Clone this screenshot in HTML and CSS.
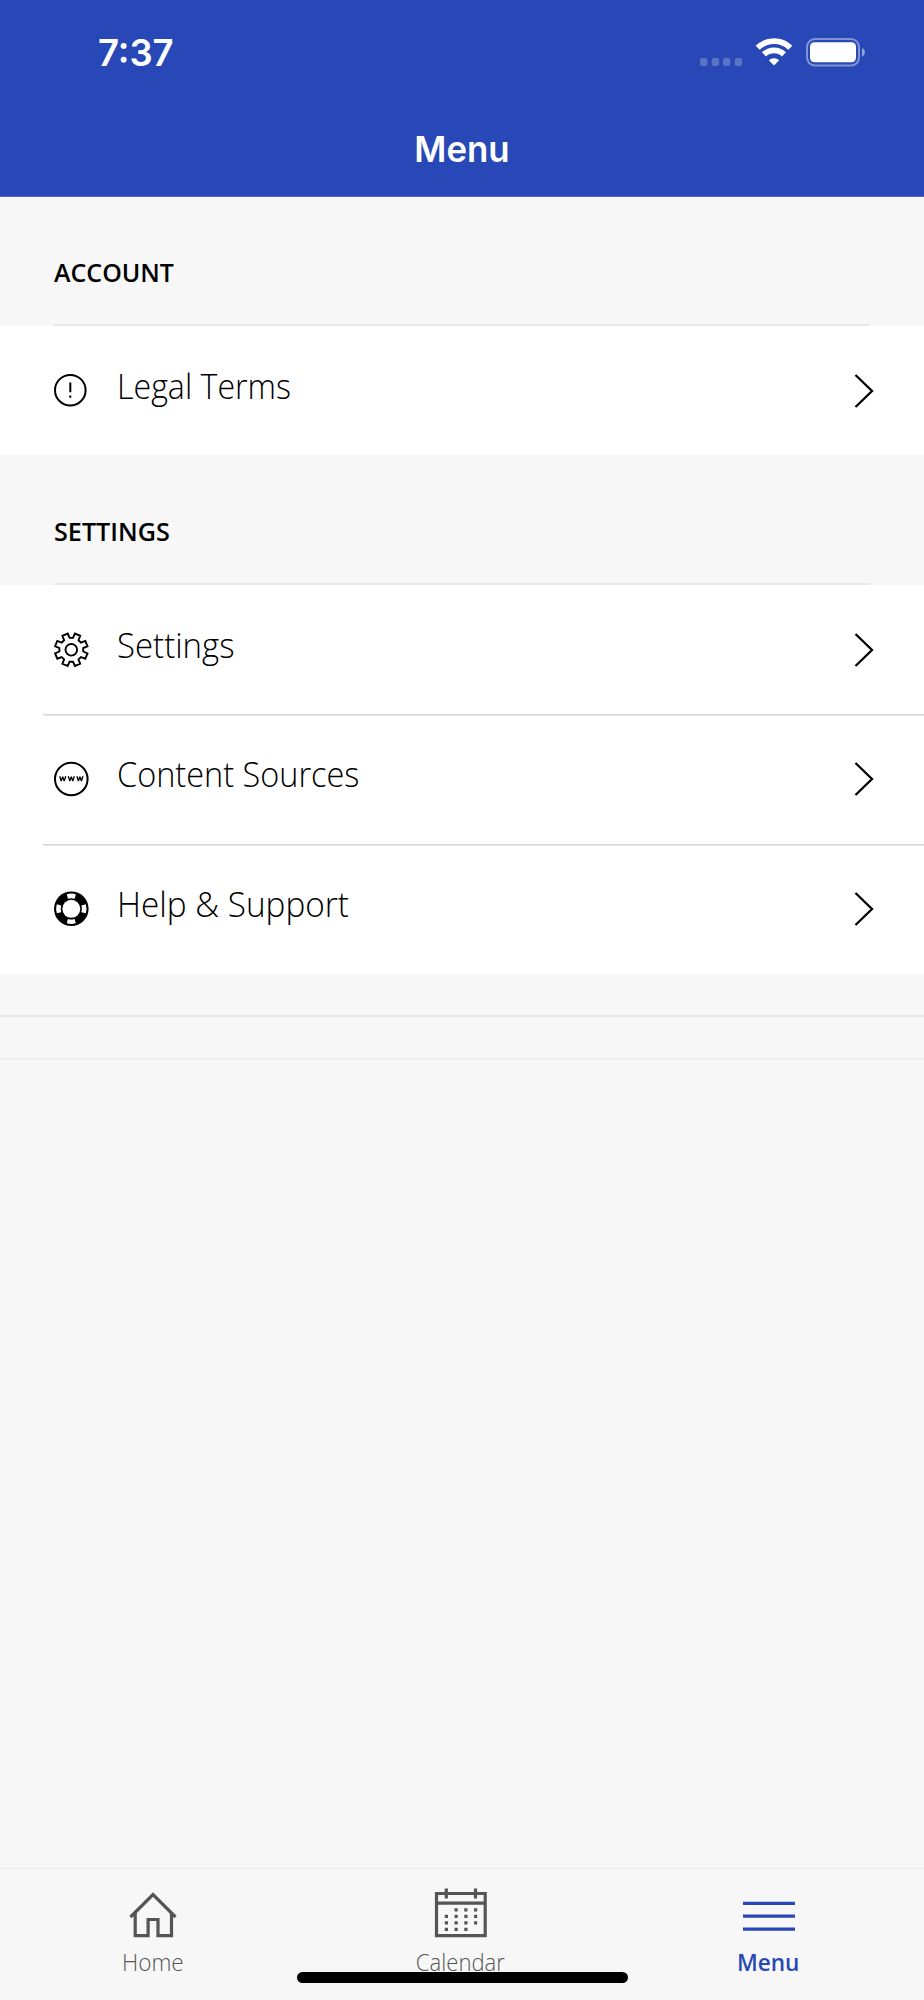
FILE: index.html
```html
<!DOCTYPE html>
<html lang="en">
<head>
<meta charset="utf-8">
<title>Menu</title>
<link rel="stylesheet" href="styles.css">
</head>
<body>
<div class="screen">
  <header class="header">
    <div class="status">
      <span class="time">7:37</span>
      <svg class="status-icons" width="170" height="32" viewBox="0 0 170 32">
        <g fill="#fff" fill-opacity=".24"><rect x="0" y="20" width="7.4" height="8" rx="2"/><rect x="11.7" y="20" width="7.4" height="8" rx="2"/><rect x="23" y="20" width="7.4" height="8" rx="2"/><rect x="34.7" y="20" width="7.4" height="8" rx="2"/></g>
        <g fill="none" stroke="#fff" stroke-width="5.8"><path d="M57.7 9.8A23.3 23.3 0 0 1 90.3 9.8"/><path d="M64 16.4A14.3 14.3 0 0 1 84 16.4"/></g>
        <path d="M74 27.6L68.8 22.3A7.4 7.4 0 0 1 79.2 22.3Z" fill="#fff"/>
        <rect x="107" y="1" width="52" height="26.6" rx="8" fill="none" stroke="#fff" stroke-opacity=".42" stroke-width="2"/>
        <rect x="110" y="4.3" width="46" height="20" rx="4.5" fill="#fff"/>
        <path d="M162 10Q165 11.5 165 14.3T162 18.7Z" fill="#fff" fill-opacity=".5"/>
      </svg>
    </div>
    <h1 class="title">Menu</h1>
  </header>
  <main class="content">
    <h2 class="section"><span class="section-text account">ACCOUNT</span></h2>
    <div class="row">
      <svg class="icon" width="36" height="36" viewBox="0 0 36 36"><circle cx="16.3" cy="17.2" r="15.3" fill="none" stroke="#000" stroke-width="2"/><path d="M16.3 9.5V19.3M16.3 22.4V24.8" stroke="#000" stroke-width="2"/></svg>
      <span class="label legal">Legal Terms</span>
      <svg class="chevron" width="20" height="36" viewBox="0 0 20 36"><path d="M1.5 2L18 18 1.5 34" fill="none" stroke="#000" stroke-width="2.3"/></svg>
    </div>
    <h2 class="section"><span class="section-text settings-title">SETTINGS</span></h2>
    <div class="row">
      <svg class="icon" width="36" height="36" viewBox="0 0 36 36"><g fill="none" stroke="#000" stroke-width="1.9" transform="translate(17.3 17.8)"><circle r="5.8"/><path d="M11.9 1.7L16.2 3.6L14 8.9L9.6 7.2L7.2 9.6L8.9 14L3.6 16.2L1.7 11.9H-1.7L-3.6 16.2L-8.9 14L-7.2 9.6L-9.6 7.2L-14 8.9L-16.2 3.6L-11.9 1.7V-1.7L-16.2 -3.6L-14 -8.9L-9.6 -7.2L-7.2 -9.6L-8.9 -14L-3.6 -16.2L-1.7 -11.9H1.7L3.6 -16.2L8.9 -14L7.2 -9.6L9.6 -7.2L14 -8.9L16.2 -3.6L11.9 -1.7Z"/></g></svg>
      <span class="label settings">Settings</span>
      <svg class="chevron" width="20" height="36" viewBox="0 0 20 36"><path d="M1.5 2L18 18 1.5 34" fill="none" stroke="#000" stroke-width="2.3"/></svg>
    </div>
    <div class="row divided">
      <svg class="icon" width="36" height="36" viewBox="0 0 36 36"><circle cx="17.3" cy="18" r="16.3" fill="none" stroke="#000" stroke-width="2"/><path d="M5.7 15.2L7.2 20L8.7 15.8L10.2 20L11.7 15.2M14.3 15.2L15.8 20L17.3 15.8L18.8 20L20.3 15.2M22.9 15.2L24.4 20L25.9 15.8L27.4 20L28.9 15.2" fill="none" stroke="#000" stroke-width="1.3" stroke-linejoin="bevel"/></svg>
      <span class="label sources">Content Sources</span>
      <svg class="chevron" width="20" height="36" viewBox="0 0 20 36"><path d="M1.5 2L18 18 1.5 34" fill="none" stroke="#000" stroke-width="2.3"/></svg>
    </div>
    <div class="row divided">
      <svg class="icon" width="36" height="36" viewBox="0 -.5 36 36"><circle cx="17.3" cy="17.3" r="17.3"/><circle cx="17.3" cy="17.3" r="9" fill="#fff"/><path d="M12.8 2.8Q17.3 1.4 21.8 2.8L20.7 7.2Q17.3 6.2 13.9 7.2ZM12.8 31.8Q17.3 33.2 21.8 31.8L20.7 27.4Q17.3 28.4 13.9 27.4ZM2.8 12.8Q1.4 17.3 2.8 21.8L7.2 20.7Q6.2 17.3 7.2 13.9ZM31.8 12.8Q33.2 17.3 31.8 21.8L27.4 20.7Q28.4 17.3 27.4 13.9Z" fill="#fff"/></svg>
      <span class="label help">Help &amp; Support</span>
      <svg class="chevron" width="20" height="36" viewBox="0 0 20 36"><path d="M1.5 2L18 18 1.5 34" fill="none" stroke="#000" stroke-width="2.3"/></svg>
    </div>
    <div class="footer-gap"></div>
    <div class="footer-gap second"></div>
  </main>
  <nav class="tabs">
    <div class="tab">
      <svg width="56" height="60" viewBox="0 0 56 60"><g fill="none" stroke="#555" stroke-width="3.2"><path d="M5.5 33L28 10.5L50.5 33"/><path d="M10.2 29V51.7H23.1V35.5H33V51.7H46.5V29"/></g></svg>
      <span class="tab-text home">Home</span>
    </div>
    <div class="tab">
      <svg width="56" height="60" viewBox="0 0 56 60"><g fill="none" stroke="#555" stroke-width="3.2"><path d="M3.5 9.5H52.2V51.7H3.5ZM3.5 19.2H52.2M13.3 4.5V14.5M42.5 4.5V14.5"/><path d="M21.5 25.8H44.2M11.8 32.3H44.2M11.8 38.8H44.2M11.8 45.3H34.5" stroke-dasharray="3.2 6.55"/></g></svg>
      <span class="tab-text calendar">Calendar</span>
    </div>
    <div class="tab active">
      <svg width="56" height="60" viewBox="0 0 56 60"><path d="M2 19.3H54M2 32.2H54M2 45.2H54" stroke="#2748b6" stroke-width="3.2"/></svg>
      <span class="tab-text menu">Menu</span>
    </div>
    <div class="home-indicator"></div>
  </nav>
</div>
</body>
</html>
```
FILE: styles.css
```css
* { box-sizing: border-box; }
body { margin: 0; font-family: "Open Sans", "Noto Sans", sans-serif; color: #000; background: #f7f7f7; }
.screen { width: 924px; height: 2000px; display: flex; flex-direction: column; }
.header { height: 197px; background: #2748b6; border-bottom: 1px solid #5068b6; color: #fff; font-family: Inter, sans-serif; flex: none; }
.status { height: 104px; display: flex; justify-content: space-between; padding: 31px 54px 0 98px; }
.time { font-size: 37px; line-height: 44px; font-weight: 570; transform: scaleX(.985); transform-origin: left; }
.status-icons { margin-top: 7px; }
.title { margin: 0; text-align: center; font-size: 36px; line-height: 90px; font-weight: 570; transform: scaleX(.967); }
.content { flex: 1; margin-top: -1px; }
.section { margin: 0 54px; height: 129.6px; border-bottom: 2px solid #e8e8e8; padding-top: 59px; font-size: 26px; line-height: 34px; font-weight: 600; }
.section-text, .label, .tab-text { display: inline-block; white-space: nowrap; }
.section-text, .label { transform-origin: left; }
.account { transform: scaleX(.96); }
.settings-title { transform: scaleX(.968); }
.row { height: 129.6px; background: #fff; display: flex; align-items: flex-start; padding: 47px 50px 0 54px; }
.divided { background: linear-gradient(#d4d4d4, #d4d4d4) 43px 0 / 100% 1.5px no-repeat #fff; }
.icon { flex: none; }
.label { margin: -11px 0 0 27px; font-size: 34px; line-height: 48px; font-weight: 340; }
.legal { transform: scaleX(.946); }
.settings { transform: scaleX(.97); }
.sources { transform: scaleX(.955); }
.help { transform: scaleX(.98); }
.chevron { margin-left: auto; }
.footer-gap { height: 43.5px; border-bottom: 2px solid #e8e8e8; }
.second { height: 43px; border-bottom-color: #ededed; }
.tabs { position: relative; height: 132px; border-top: 1px solid #ebebeb; display: grid; grid-template-columns: 306px 309px 307px; flex: none; }
.tab { display: flex; flex-direction: column; align-items: center; padding-top: 15px; }
.tab svg { flex: none; }
.tab-text { font-size: 24px; line-height: 32px; font-weight: 320; color: #555; margin-top: 2px; }
.home { transform: scaleX(.94); }
.calendar { transform: scaleX(.92); }
.active .tab-text { color: #2748b6; font-weight: 600; transform: scaleX(.94); }
.home-indicator { position: absolute; left: 297px; top: 103px; width: 331px; height: 11px; border-radius: 6px; background: #000; }
```
